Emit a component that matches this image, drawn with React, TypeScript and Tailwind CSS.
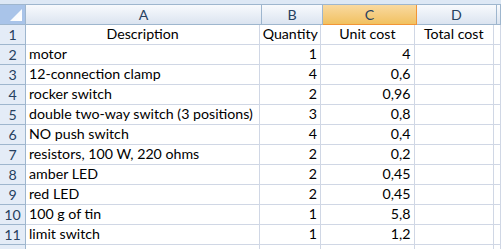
const rows: [string, string, string][] = [
  ["motor", "1", "4"],
  ["12-connection clamp", "4", "0,6"],
  ["rocker switch", "2", "0,96"],
  ["double two-way switch (3 positions)", "3", "0,8"],
  ["NO push switch", "4", "0,4"],
  ["resistors, 100 W, 220 ohms", "2", "0,2"],
  ["amber LED", "2", "0,45"],
  ["red LED", "2", "0,45"],
  ["100 g of tin", "1", "5,8"],
  ["limit switch", "1", "1,2"],
];

const cell = "h-[20px] border-b border-r border-[#d0d7e5] px-[3px] flex items-end pb-[1px] leading-[18px]";
const rowHead =
  "w-[26px] shrink-0 h-[20px] border-b border-r border-[#9eb6ce] bg-[#e4ecf7] flex items-center justify-center text-[#27415f]";
const colHead =
  "h-[20px] border-b border-r border-[#9eb6ce] bg-gradient-to-b from-[#f8fafd] to-[#dbe4f0] flex items-center justify-center text-[#27415f]";

export default function App() {
  return (
    <div
      className="w-[501px] h-[249px] overflow-hidden bg-white text-[14.2px] text-black"
      style={{ fontFamily: "Lato, 'Noto Sans', sans-serif" }}
    >
      <div className="h-[5px] bg-[#dde8f5] border-b border-[#9eb6ce]" />
      <div className="flex">
        <div className="w-[26px] shrink-0 h-[20px] border-b border-r border-[#9eb6ce] bg-[#a9c4e9] relative">
          <svg className="absolute right-[3px] bottom-[3px]" width="12" height="12" viewBox="0 0 12 12">
            <defs>
              <linearGradient id="tri" x1="0" y1="0" x2="1" y2="1">
                <stop offset="0" stopColor="#f4f8fc" />
                <stop offset="1" stopColor="#ffffff" />
              </linearGradient>
            </defs>
            <polygon points="12,0 12,12 0,12" fill="url(#tri)" />
          </svg>
        </div>
        <div className={`${colHead} w-[236px]`}>A</div>
        <div className={`${colHead} w-[61px]`}>B</div>
        <div className="w-[94px] h-[20px] border-b border-r border-[#f29536] bg-gradient-to-b from-[#f9d99f] to-[#f1c15f] flex items-center justify-center text-[#27415f]">
          C
        </div>
        <div className={`${colHead} w-[80px]`}>D</div>
        <div className={`${colHead} flex-1`} />
      </div>
      <div className="flex">
        <div className={rowHead}>1</div>
        <div className={`${cell} w-[236px] justify-center`}>Description</div>
        <div className={`${cell} w-[61px] justify-center`}>Quantity</div>
        <div className={`${cell} w-[94px] justify-center`}>Unit cost</div>
        <div className={`${cell} w-[80px] justify-center`}>Total cost</div>
        <div className={`${cell} flex-1`} />
      </div>
      {rows.map(([d, q, u], i) => (
        <div key={i} className="flex">
          <div className={rowHead}>{i + 2}</div>
          <div className={`${cell} w-[236px] whitespace-nowrap`}>{d}</div>
          <div className={`${cell} w-[61px] justify-end`}>{q}</div>
          <div className={`${cell} w-[94px] justify-end`}>{u}</div>
          <div className={`${cell} w-[80px]`} />
          <div className={`${cell} flex-1`} />
        </div>
      ))}
      <div className="flex">
        <div className={rowHead} />
        <div className={`${cell} w-[236px]`} />
        <div className={`${cell} w-[61px]`} />
        <div className={`${cell} w-[94px]`} />
        <div className={`${cell} w-[80px]`} />
        <div className={`${cell} flex-1`} />
      </div>
    </div>
  );
}
